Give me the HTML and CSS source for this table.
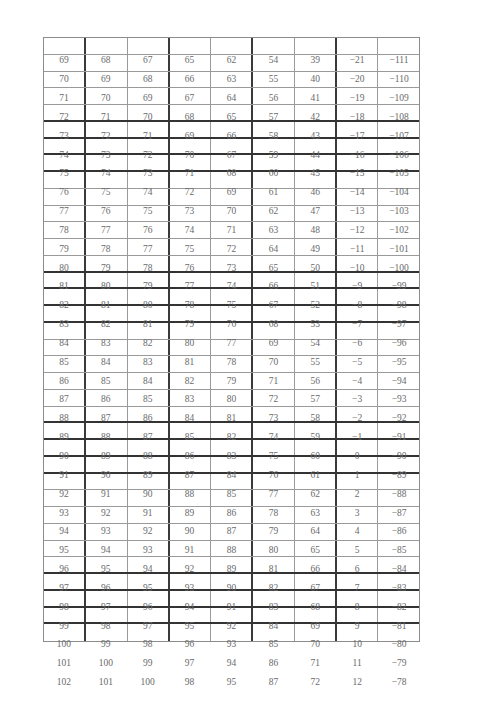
FILE: index.html
```html
<!DOCTYPE html>
<html>
<head>
<meta charset="utf-8">
<link rel="stylesheet" href="styles.css">
</head>
<body>
<div class="page">
  <div class="stack">
    <div class="grid">
      <div class="gl"></div>
      <div class="gl"></div><div class="gl"></div><div class="gl"></div><div class="gl k"></div>
      <div class="gl k"></div><div class="gl k"></div><div class="gl k"></div><div class="gl"></div>
      <div class="gl"></div><div class="gl"></div><div class="gl"></div><div class="gl"></div>
      <div class="gl k"></div><div class="gl k"></div><div class="gl k"></div><div class="gl k"></div>
      <div class="gl"></div><div class="gl"></div><div class="gl"></div><div class="gl"></div>
      <div class="gl"></div><div class="gl k"></div><div class="gl k"></div><div class="gl k"></div>
      <div class="gl k"></div><div class="gl"></div><div class="gl"></div><div class="gl"></div>
      <div class="gl"></div><div class="gl"></div><div class="gl k"></div><div class="gl k"></div>
      <div class="gl k"></div><div class="gl k"></div><div class="gl last"></div>
    </div>
    <div class="nums">
      <div class="r"><span>69</span><span>68</span><span>67</span><span>65</span><span>62</span><span>54</span><span>39</span><span>−21</span><span>−111</span></div>
      <div class="r"><span>70</span><span>69</span><span>68</span><span>66</span><span>63</span><span>55</span><span>40</span><span>−20</span><span>−110</span></div>
      <div class="r"><span>71</span><span>70</span><span>69</span><span>67</span><span>64</span><span>56</span><span>41</span><span>−19</span><span>−109</span></div>
      <div class="r"><span>72</span><span>71</span><span>70</span><span>68</span><span>65</span><span>57</span><span>42</span><span>−18</span><span>−108</span></div>
      <div class="r"><span>73</span><span>72</span><span>71</span><span>69</span><span>66</span><span>58</span><span>43</span><span>−17</span><span>−107</span></div>
      <div class="r"><span>74</span><span>73</span><span>72</span><span>70</span><span>67</span><span>59</span><span>44</span><span>−16</span><span>−106</span></div>
      <div class="r"><span>75</span><span>74</span><span>73</span><span>71</span><span>68</span><span>60</span><span>45</span><span>−15</span><span>−105</span></div>
      <div class="r"><span>76</span><span>75</span><span>74</span><span>72</span><span>69</span><span>61</span><span>46</span><span>−14</span><span>−104</span></div>
      <div class="r"><span>77</span><span>76</span><span>75</span><span>73</span><span>70</span><span>62</span><span>47</span><span>−13</span><span>−103</span></div>
      <div class="r"><span>78</span><span>77</span><span>76</span><span>74</span><span>71</span><span>63</span><span>48</span><span>−12</span><span>−102</span></div>
      <div class="r"><span>79</span><span>78</span><span>77</span><span>75</span><span>72</span><span>64</span><span>49</span><span>−11</span><span>−101</span></div>
      <div class="r"><span>80</span><span>79</span><span>78</span><span>76</span><span>73</span><span>65</span><span>50</span><span>−10</span><span>−100</span></div>
      <div class="r"><span>81</span><span>80</span><span>79</span><span>77</span><span>74</span><span>66</span><span>51</span><span>−9</span><span>−99</span></div>
      <div class="r"><span>82</span><span>81</span><span>80</span><span>78</span><span>75</span><span>67</span><span>52</span><span>−8</span><span>−98</span></div>
      <div class="r"><span>83</span><span>82</span><span>81</span><span>79</span><span>76</span><span>68</span><span>53</span><span>−7</span><span>−97</span></div>
      <div class="r"><span>84</span><span>83</span><span>82</span><span>80</span><span>77</span><span>69</span><span>54</span><span>−6</span><span>−96</span></div>
      <div class="r"><span>85</span><span>84</span><span>83</span><span>81</span><span>78</span><span>70</span><span>55</span><span>−5</span><span>−95</span></div>
      <div class="r"><span>86</span><span>85</span><span>84</span><span>82</span><span>79</span><span>71</span><span>56</span><span>−4</span><span>−94</span></div>
      <div class="r"><span>87</span><span>86</span><span>85</span><span>83</span><span>80</span><span>72</span><span>57</span><span>−3</span><span>−93</span></div>
      <div class="r"><span>88</span><span>87</span><span>86</span><span>84</span><span>81</span><span>73</span><span>58</span><span>−2</span><span>−92</span></div>
      <div class="r"><span>89</span><span>88</span><span>87</span><span>85</span><span>82</span><span>74</span><span>59</span><span>−1</span><span>−91</span></div>
      <div class="r"><span>90</span><span>89</span><span>88</span><span>86</span><span>83</span><span>75</span><span>60</span><span>0</span><span>−90</span></div>
      <div class="r"><span>91</span><span>90</span><span>89</span><span>87</span><span>84</span><span>76</span><span>61</span><span>1</span><span>−89</span></div>
      <div class="r"><span>92</span><span>91</span><span>90</span><span>88</span><span>85</span><span>77</span><span>62</span><span>2</span><span>−88</span></div>
      <div class="r"><span>93</span><span>92</span><span>91</span><span>89</span><span>86</span><span>78</span><span>63</span><span>3</span><span>−87</span></div>
      <div class="r"><span>94</span><span>93</span><span>92</span><span>90</span><span>87</span><span>79</span><span>64</span><span>4</span><span>−86</span></div>
      <div class="r"><span>95</span><span>94</span><span>93</span><span>91</span><span>88</span><span>80</span><span>65</span><span>5</span><span>−85</span></div>
      <div class="r"><span>96</span><span>95</span><span>94</span><span>92</span><span>89</span><span>81</span><span>66</span><span>6</span><span>−84</span></div>
      <div class="r"><span>97</span><span>96</span><span>95</span><span>93</span><span>90</span><span>82</span><span>67</span><span>7</span><span>−83</span></div>
      <div class="r"><span>98</span><span>97</span><span>96</span><span>94</span><span>91</span><span>83</span><span>68</span><span>8</span><span>−82</span></div>
      <div class="r"><span>99</span><span>98</span><span>97</span><span>95</span><span>92</span><span>84</span><span>69</span><span>9</span><span>−81</span></div>
      <div class="r"><span>100</span><span>99</span><span>98</span><span>96</span><span>93</span><span>85</span><span>70</span><span>10</span><span>−80</span></div>
      <div class="r"><span>101</span><span>100</span><span>99</span><span>97</span><span>94</span><span>86</span><span>71</span><span>11</span><span>−79</span></div>
      <div class="r"><span>102</span><span>101</span><span>100</span><span>98</span><span>95</span><span>87</span><span>72</span><span>12</span><span>−78</span></div>
    </div>
  </div>
</div>
</body>
</html>
```
FILE: styles.css
```css
html, body {
  margin: 0;
  padding: 0;
  background: #ffffff;
}

.page {
  padding: 37px 0 0 43px;
}

.stack {
  display: grid;
  width: 377px;
}

.grid {
  grid-area: 1 / 1;
  box-sizing: border-box;
  width: 377px;
  height: 605px;
  border: 1px solid #8c8c8c;
  display: grid;
  grid-template-rows: 17px repeat(35, 1fr);
  background-image: repeating-linear-gradient(to right,
    transparent 0, transparent 40.3px,
    #3a3a3a 40.3px, #3a3a3a 42.3px,
    transparent 42.3px, transparent 82.6px,
    #9a9a9a 82.6px, #9a9a9a 83.6px);
}

.gl {
  box-sizing: border-box;
  border-bottom: 1px solid #9a9a9a;
}

.gl.k {
  border-bottom: 2px solid #333333;
}

.gl.last {
  border-bottom: none;
}

.nums {
  grid-area: 1 / 1;
  margin-top: 14.3px;
  display: grid;
  grid-auto-rows: 18.85px;
  font-family: "Liberation Serif", "Times New Roman", serif;
  font-size: 9.5px;
  color: #6a6a6a;
}

.r {
  display: grid;
  grid-template-columns: repeat(9, 1fr);
  line-height: 18.85px;
  text-align: center;
}
```
